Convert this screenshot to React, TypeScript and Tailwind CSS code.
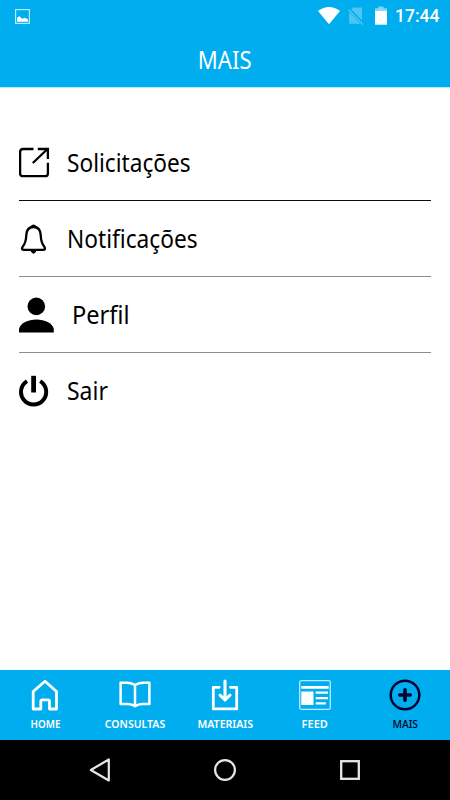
import type { ReactNode } from "react";

const ExternalIcon = () => (
  <svg width="36" height="36" viewBox="0 0 36 36" fill="none" stroke="#000" strokeWidth="2.300">
    <path d="M14.500 4H4Q1.100 4 1.100 7V28.400Q1.100 31.200 4 31.200H26Q28.900 31.200 28.900 28.400V17.800" />
    <path d="M13.800 18L28 4.500M18.800 4H28.900V14" />
  </svg>
);

const BellIcon = () => (
  <svg width="36" height="36" viewBox="0 -1 36 36" fill="none" stroke="#000" strokeWidth="2.300" strokeLinejoin="round">
    <path d="M14.500 5C9.500 5 7.500 9 7.300 13C7.100 19 6.500 21.500 3.500 25Q2 27.800 5 27.800H24Q27 27.800 25.500 25C22.500 21.500 21.900 19 21.700 13C21.500 9 19.500 5 14.500 5Z" />
    <path d="M11.700 5.500Q12 3 14.500 3Q17 3 17.300 5.500ZM12.200 29H16.800Q16 31.200 14.500 31.200Q13 31.200 12.200 29Z" fill="#000" strokeWidth="1" />
  </svg>
);

const PersonIcon = () => (
  <svg width="36" height="36" viewBox="0 -0.500 36 36" fill="#000">
    <circle cx="17.300" cy="8.900" r="8.800" />
    <path d="M0 35V31.500C1.500 25.500 9 22 17.400 22S33.300 25.500 34.800 31.500V35Z" />
  </svg>
);

const PowerIcon = () => (
  <svg width="36" height="36" viewBox="0 -1 36 36" fill="none" stroke="#000" strokeWidth="3.900">
    <path d="M8 7.200A12.600 12.600 0 1 0 21.200 7.200" />
    <path d="M14.600 1.800V18.500" strokeWidth="4.800" />
  </svg>
);

const menu: { label: string; icon: ReactNode; line: string; gap: string; scale: string }[] = [
  { label: "Solicitações", icon: <ExternalIcon />, line: "border-[#080818]", gap: "ml-[12px]", scale: "scale-x-[0.888]" },
  { label: "Notificações", icon: <BellIcon />, line: "border-[#8c8c91]", gap: "ml-[12px]", scale: "scale-x-[0.89]" },
  { label: "Perfil", icon: <PersonIcon />, line: "border-[#8c8c91]", gap: "ml-[17px]", scale: "scale-x-[0.925]" },
  { label: "Sair", icon: <PowerIcon />, line: "border-transparent", gap: "ml-[12px]", scale: "scale-x-[0.9]" },
];

const HomeIcon = () => (
  <svg width="32" height="34" viewBox="0 0 32 34" fill="none" stroke="#fff" strokeWidth="2.800" strokeLinejoin="round">
    <path d="M4.200 12.500L16 2.200L27.500 12.500V30H20.500V22.500Q20.500 20.800 18.800 20.800H13.500Q11.800 20.800 11.800 22.500V30H4.200Z" />
  </svg>
);

const BookIcon = () => (
  <svg width="34" height="34" viewBox="0 0 34 34" fill="none" stroke="#fff" strokeWidth="2.500" strokeLinejoin="round">
    <path d="M17 6Q13 3.800 9 3.800H2.600V25H10Q14 25 17 27.300Q20 25 24 25H31.400V3.800H25Q21 3.800 17 6ZM17 6V27" />
  </svg>
);

const DownloadIcon = () => (
  <svg width="32" height="34" viewBox="0 0 32 34" fill="none" stroke="#fff" strokeWidth="3.100" strokeLinecap="round" strokeLinejoin="round">
    <path d="M10.200 8.300H4.300V29.900H27.700V8.300H21.500" strokeWidth="2.800" />
    <path d="M16 2V20.500M11 16.200L16 21L21 16.200" />
  </svg>
);

const FeedIcon = () => (
  <svg width="32" height="34" viewBox="0 0 32 34" fill="#fff">
    <rect x="0.700" y="1.700" width="30.600" height="28.600" rx="1.500" fill="none" stroke="#bdeafc" strokeWidth="1.300" />
    <path d="M2.300 7H29.700V9.700H2.300ZM2.300 12.500H14.500V26H2.300ZM16.700 12.500H29V14.800H16.700ZM16.700 18H29V20.300H16.700ZM16.700 23.300H26.800V25.600H16.700Z" />
  </svg>
);

const PlusIcon = () => (
  <svg width="32" height="34" viewBox="0 0 32 34" fill="none" stroke="#030330" strokeLinecap="round">
    <circle cx="16" cy="16" r="14.300" strokeWidth="2.500" />
    <path d="M16 10.800V21.200M10.800 16H21.200" strokeWidth="3.600" />
  </svg>
);

const tabs: { label: string; icon: ReactNode; color: string; scale: string }[] = [
  { label: "HOME", icon: <HomeIcon />, color: "font-semibold text-white", scale: "scale-x-[0.86]" },
  { label: "CONSULTAS", icon: <BookIcon />, color: "font-semibold text-white", scale: "scale-x-[0.915]" },
  { label: "MATERIAIS", icon: <DownloadIcon />, color: "font-semibold text-white", scale: "scale-x-[0.92]" },
  { label: "FEED", icon: <FeedIcon />, color: "font-semibold text-white", scale: "scale-x-[0.955]" },
  { label: "MAIS", icon: <PlusIcon />, color: "font-medium text-[#020228]", scale: "scale-x-[0.9]" },
];

export default function App() {
  return (
    <div className="flex h-[800px] w-[450px] flex-col overflow-hidden bg-white font-['Noto_Sans',sans-serif]">
      <header className="h-[88px] border-b border-[#b9e9fb] bg-[#00adef] text-white">
        <div className="flex h-8 items-center pl-[15px] pr-[10px]">
          <svg width="15" height="15" viewBox="0 0 15 15">
            <rect x="0.600" y="0.600" width="13.800" height="13.800" fill="none" stroke="#b5e8fb" strokeWidth="1.200" />
            <path d="M2 12.800V9L4.300 7L7 9.800L10 8.800L13 10.500V12.800Z" fill="#fff" />
          </svg>
          <svg className="ml-auto" width="70" height="20" viewBox="0 0 70 20" fill="#fff">
            <path d="M0 5Q11 -3 22 5L11 18.300Z" />
            <path d="M35 1.500H44V14.500L33.200 3.500ZM31.200 6L42.500 17.800H31.200Z" fill="#4dc6f4" />
            <path d="M31 3L45.500 18.500" stroke="#00adef" strokeWidth="2.800" />
            <path d="M30.500 3.500L45 18.700" stroke="#4dc6f4" strokeWidth="1.300" />
            <path d="M57 5V2.300H60.500V0.500H65.500V2.300H69V5Z" fill="#7fd6f7" />
            <path d="M57 5H69V18.700H57Z" />
          </svg>
          <span className="ml-[7px] w-[45px] whitespace-nowrap font-['Roboto',sans-serif] text-[17.500px] font-medium leading-8">17:44</span>
        </div>
        <h1 className="flex h-[54px] items-center justify-center text-[26px]">
          <span className="block scale-x-[0.85]">MAIS</span>
        </h1>
      </header>

      <main className="flex-1 px-[19px] pt-[37px]">
        {menu.map((m) => (
          <div key={m.label} className={`flex h-[76px] w-[412px] items-center border-b ${m.line}`}>
            {m.icon}
            <span className={`mb-px block origin-left text-[25.500px] leading-9 text-black ${m.gap} ${m.scale}`}>{m.label}</span>
          </div>
        ))}
      </main>

      <nav className="grid h-[70px] grid-cols-5 bg-[#00adef]">
        {tabs.map((t) => (
          <div key={t.label} className="flex flex-col items-center pt-[9px]">
            {t.icon}
            <span className={`mt-[3px] block text-[11.500px] leading-4 ${t.color} ${t.scale}`}>{t.label}</span>
          </div>
        ))}
      </nav>

      <footer className="flex h-[60px] items-center justify-center gap-[101px] bg-black">
        <svg width="24" height="24" viewBox="0 0 24 24" fill="none" stroke="#e6e6e6" strokeWidth="2.200" strokeLinejoin="round">
          <path d="M20.800 1.500V22.500L2.800 12Z" />
        </svg>
        <svg width="24" height="24" viewBox="0 0 24 24" fill="none" stroke="#e6e6e6" strokeWidth="2.200">
          <circle cx="12" cy="12" r="9.900" />
        </svg>
        <svg width="24" height="24" viewBox="0 0 24 24" fill="none" stroke="#e6e6e6" strokeWidth="2.300">
          <rect x="3.200" y="3.200" width="17.600" height="17.600" />
        </svg>
      </footer>
    </div>
  );
}
